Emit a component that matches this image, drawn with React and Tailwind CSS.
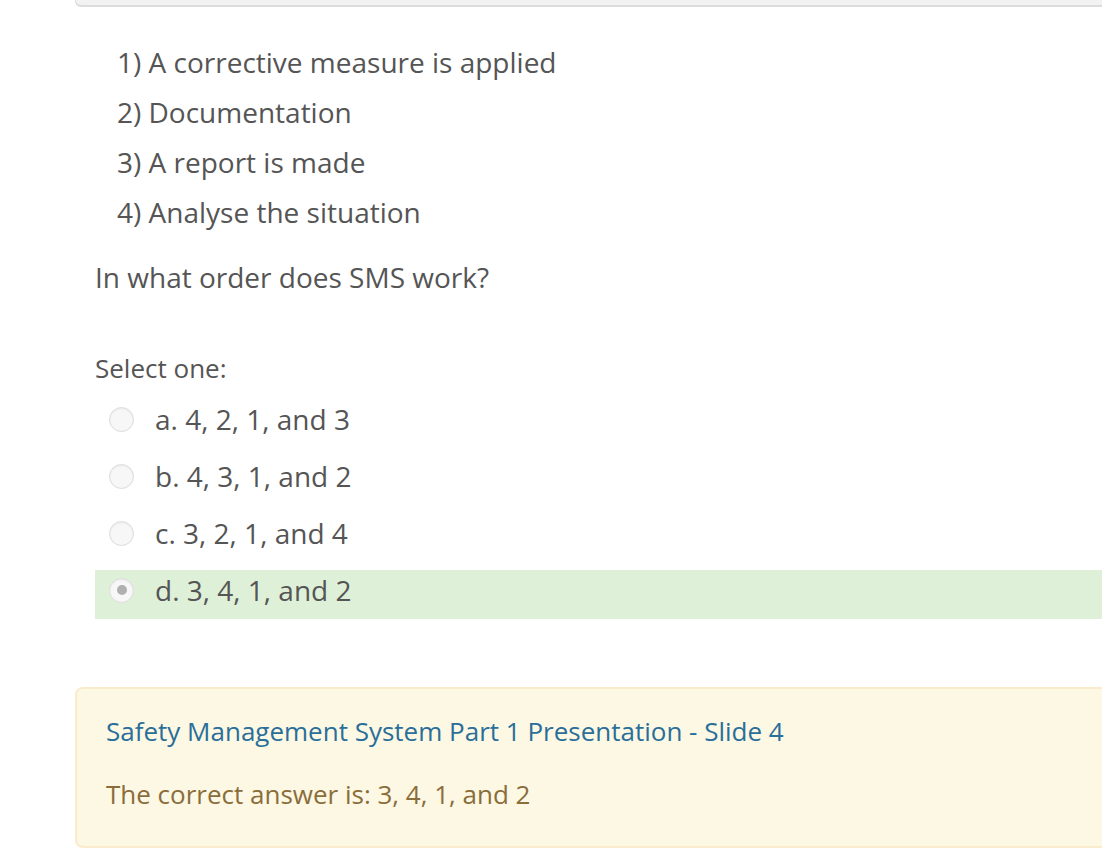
const STEPS = [
  '1) A corrective measure is applied',
  '2) Documentation',
  '3) A report is made',
  '4) Analyse the situation',
]

const OPTIONS = [
  { key: 'a', label: '4, 2, 1, and 3' },
  { key: 'b', label: '4, 3, 1, and 2' },
  { key: 'c', label: '3, 2, 1, and 4' },
  { key: 'd', label: '3, 4, 1, and 2', checked: true },
]

function Radio({ checked }) {
  return (
    <span className="flex h-[25px] w-[25px] shrink-0 items-center justify-center rounded-full border border-[#dcdcdc] bg-[#f7f7f7] shadow-[inset_0_1px_2px_rgba(0,0,0,0.06)]">
      {checked && <span className="h-[10px] w-[10px] rounded-full bg-[#b0b0b0]" />}
    </span>
  )
}

export default function App() {
  return (
    <div className="h-[868px] w-[1102px] overflow-hidden bg-white font-['Open_Sans',sans-serif] text-[26px] text-[#555]">
      <div className="w-[1200px]">
        <div className="ml-[75px] h-[7px] rounded-bl-[6px] border-b-2 border-l border-[#dcdcdc] bg-[#f2f2f2]" />

        <div className="pl-[95px]">
          <div className="mt-[36px] flex flex-col pl-[22px] text-[28px]">
            {STEPS.map((s) => (
              <div key={s} className="h-[50px] leading-[38px]">
                {s}
              </div>
            ))}
          </div>

          <p className="mt-[14px] text-[28px] leading-[40px]">In what order does SMS work?</p>

          <p className="mt-[51px] leading-[40px]">Select one:</p>

          <div className="mt-[11px] flex flex-col text-[28px]">
            {OPTIONS.map((o) => (
              <div
                key={o.key}
                className={`flex h-[49px] items-center gap-[21px] pb-[9px] pl-[14px] ${o.checked ? 'bg-[#dff0d8]' : ''} ${o.key === 'd' ? '' : 'mb-[8px]'}`}
              >
                <Radio checked={o.checked} />
                <span>
                  {o.key}. {o.label}
                </span>
              </div>
            ))}
          </div>
        </div>

        <div className="ml-[75px] mt-[68px] h-[161px] rounded-[8px] border-2 border-[#faebcc] bg-[#fcf8e3] pl-[29px] pt-[22px]">
          <div className="leading-[40px] text-[#2a6e9a]">Safety Management System Part 1 Presentation - Slide 4</div>
          <div className="mt-[23px] leading-[40px] text-[#8a6d3b]">The correct answer is: 3, 4, 1, and 2</div>
        </div>
      </div>
    </div>
  )
}
